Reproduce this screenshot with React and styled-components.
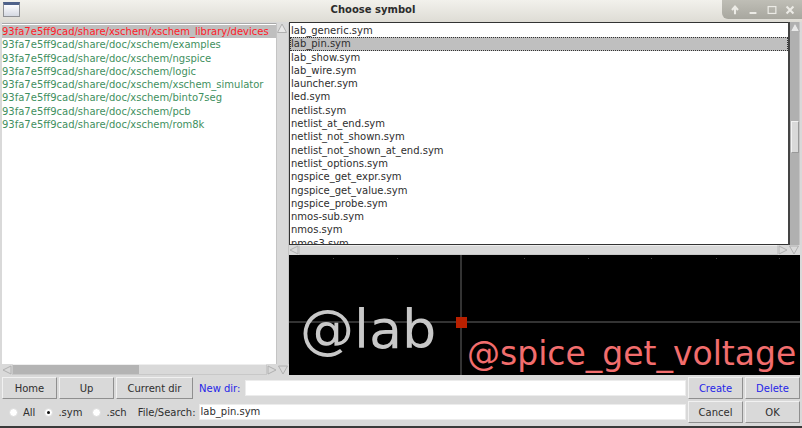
import React from 'react'
import styled, { createGlobalStyle } from 'styled-components'

const GlobalStyle = createGlobalStyle`
  html, body { margin: 0; padding: 0; background: #dcdad5; }
  * { box-sizing: border-box; }
`

const dirs = [
  '93fa7e5ff9cad/share/xschem/xschem_library/devices',
  '93fa7e5ff9cad/share/doc/xschem/examples',
  '93fa7e5ff9cad/share/doc/xschem/ngspice',
  '93fa7e5ff9cad/share/doc/xschem/logic',
  '93fa7e5ff9cad/share/doc/xschem/xschem_simulator',
  '93fa7e5ff9cad/share/doc/xschem/binto7seg',
  '93fa7e5ff9cad/share/doc/xschem/pcb',
  '93fa7e5ff9cad/share/doc/xschem/rom8k',
]

const files = [
  'lab_generic.sym', 'lab_pin.sym', 'lab_show.sym', 'lab_wire.sym', 'launcher.sym', 'led.sym',
  'netlist.sym', 'netlist_at_end.sym', 'netlist_not_shown.sym', 'netlist_not_shown_at_end.sym',
  'netlist_options.sym', 'ngspice_get_expr.sym', 'ngspice_get_value.sym', 'ngspice_probe.sym',
  'nmos-sub.sym', 'nmos.sym', 'nmos3.sym',
]

const gridDots = [44, 108, 235, 299, 362, 427, 490]

const Window = styled.div`
  width: 802px;
  height: 428px;
  overflow: hidden;
  display: flex;
  flex-direction: column;
  background: #d9d9d9;
  border-bottom: 2px solid #3a3a3a;
  font-family: "DejaVu Sans", sans-serif;
  font-size: 10px;
  color: #2e2e2e;
`

const TitleBar = styled.div`
  position: relative;
  height: 22px;
  flex: none;
  display: flex;
  align-items: center;
  justify-content: center;
  padding: 0 56px 3px 0;
  background: linear-gradient(#f2f1ec, #dedcd5);
  font-weight: bold;
  color: #2c2c2c;
`

const AppIcon = styled.div`
  position: absolute;
  left: 3px;
  top: 2px;
  width: 17px;
  height: 15px;
  border: 1px solid #8e9094;
  border-top: 3px solid #4f628a;
  background: linear-gradient(#fdfdfe, #d4d8e2);
`

const WindowButtons = styled.div`
  position: absolute;
  right: 0;
  top: 0;
  width: 80px;
  height: 19px;
  display: flex;
  align-items: center;
  justify-content: space-around;
  padding: 0 3px 0 4px;
  background: linear-gradient(#bfbeb6, #a8a79f);
  border-bottom-left-radius: 6px;
`

const Body = styled.div`
  flex: none;
  height: 353px;
  display: flex;
`

const LeftPane = styled.div`
  width: 289px;
  flex: none;
  padding: 1px 0 0 2px;
  display: flex;
  flex-direction: column;
`

const RightPane = styled.div`
  flex: 1;
  min-width: 0;
  padding-right: 2px;
  display: flex;
  flex-direction: column;
`

const ListRow = styled.div`
  flex: 1;
  min-height: 0;
  display: flex;
`

const TopRow = styled(ListRow)`
  flex: none;
  height: 223px;
`

const List = styled.div`
  flex: 1;
  min-width: 0;
  overflow: hidden;
  background: #fff;
  border-top: 1px solid ${p => (p.$framed ? '#333' : '#aaa')};
  border-left: ${p => (p.$framed ? '1px solid #333' : 'none')};
  border-bottom: ${p => (p.$framed ? '1px solid #333' : 'none')};
  padding-top: 1px;
`

const Item = styled.div`
  height: 13.3px;
  line-height: 13.3px;
  padding-left: ${p => (p.$framed ? '1px' : '0')};
  white-space: nowrap;
  color: ${p => p.$color || '#2e2e2e'};
  background: ${p => (p.$active ? '#bfbfbf' : 'transparent')};
  outline: ${p => (p.$focus ? '1px dotted #333' : 'none')};
  outline-offset: -1px;
`

const VTrack = styled.div`
  position: relative;
  width: ${p => (p.$dark ? 12 : 13)}px;
  flex: none;
  background: ${p => (p.$dark ? '#b0b0b0' : '#d9d9d9')};
  border-left: ${p => (p.$dark ? '2px solid #444' : '1px solid #c4c4c4')};
  border-right: 1px solid #c4c4c4;
`

const Thumb = styled.div`
  position: absolute;
  left: 1px;
  right: 0;
  top: ${p => p.$top}px;
  height: ${p => p.$height}px;
  background: #d9d9d9;
  border: 1px solid #f2f2f2;
  border-right-color: #999;
  border-bottom-color: #999;
`

const HBar = styled.div`
  height: ${p => p.$height}px;
  flex: none;
  display: flex;
  align-items: center;
  background: #d9d9d9;
`

const HTrack = styled.div`
  align-self: stretch;
  flex: 1;
  background: ${p => (p.$fill ? 'linear-gradient(90deg, #b4b4b4 0, #b4b4b4 50%, #d9d9d9 50%)' : '#d9d9d9')};
  border: 1px solid #c8c8c8;
  border-top-color: #eee;
`

const Arrow = styled.svg`
  display: block;
  flex: none;
`

const Canvas = styled.svg`
  display: block;
  flex: 1;
  min-height: 0;
  width: 511px;
  background: #000;
`

const Controls = styled.div`
  flex: 1;
  display: flex;
  flex-direction: column;
  gap: 2px;
  padding: 2px 2px 0;
`

const ControlRow = styled.div`
  height: 22px;
  flex: none;
  display: flex;
  align-items: center;
`

const Button = styled.button`
  width: ${p => p.$width}px;
  height: 100%;
  flex: none;
  margin-left: ${p => p.$gap || 2}px;
  padding: 0;
  background: #d9d9d9;
  border: 1px solid;
  border-color: #f1f1f1 #8f8f8f #8f8f8f #f1f1f1;
  font: inherit;
  color: ${p => (p.$blue ? '#2525e8' : '#2e2e2e')};
  &:first-child { margin-left: 0; }
`

const Label = styled.span`
  margin-left: ${p => p.$gap || 0}px;
  white-space: nowrap;
  color: ${p => (p.$blue ? '#2525e8' : '#2e2e2e')};
`

const Entry = styled.div`
  flex: 1;
  min-width: 0;
  height: 16px;
  margin-left: ${p => p.$gap}px;
  padding-left: 1px;
  background: #fff;
  border: 1px solid #ececec;
  line-height: 14px;
  white-space: nowrap;
  color: #2e2e2e;
`

const Radio = styled.span`
  display: inline-flex;
  align-items: center;
  justify-content: center;
  width: 9px;
  height: 9px;
  margin-left: ${p => p.$gap}px;
  margin-right: 5px;
  border-radius: 50%;
  background: #fff;
  border: 1px solid #dcdcdc;
  &::after {
    content: '';
    width: 3px;
    height: 3px;
    border-radius: 50%;
    background: ${p => (p.$on ? '#111' : 'transparent')};
  }
`

const LeftArrow = () => (
  <Arrow width="10" height="10" viewBox="0 0 10 10"><path d="M9 1 L1 5 L9 9 Z" fill="#d9d9d9" stroke="#b0b0b0" /></Arrow>
)
const RightArrow = () => (
  <Arrow width="10" height="10" viewBox="0 0 10 10"><path d="M1 1 L9 5 L1 9 Z" fill="#d9d9d9" stroke="#b0b0b0" /></Arrow>
)
const UpArrow = () => (
  <Arrow width="10" height="10" viewBox="0 0 10 10"><path d="M5 1 L9.5 9.5 L0.5 9.5 Z" fill="#e8e8e8" stroke="#b0b0b0" /></Arrow>
)
const DownArrow = () => (
  <Arrow width="12" height="10" viewBox="0 0 12 10"><path d="M1.5 1 L10.5 1 L6 9 Z" fill="#d9d9d9" stroke="#b0b0b0" /></Arrow>
)

const WinIcon = ({ children }) => (
  <svg width="12" height="12" viewBox="0 0 14 14" fill="none" stroke="#ecebe6" strokeWidth="1.6">{children}</svg>
)

export default function App() {
  return (
    <Window>
      <GlobalStyle />
      <TitleBar>
        <AppIcon />
        Choose symbol
        <WindowButtons>
          <WinIcon><path d="M7 12 V5 M3.5 7 L7 3 L10.5 7" strokeWidth="2.4" /></WinIcon>
          <WinIcon><path d="M3 10.5 H11" strokeWidth="2.4" /></WinIcon>
          <WinIcon><rect x="2.5" y="3" width="9" height="8" strokeWidth="1.4" /></WinIcon>
          <WinIcon><path d="M3 3 L11 11 M11 3 L3 11" strokeWidth="2.4" /></WinIcon>
        </WindowButtons>
      </TitleBar>
      <Body>
        <LeftPane>
          <ListRow>
            <List>
              {dirs.map((d, i) => (
                <Item key={d} $active={i === 0} $color={i === 0 ? '#ff1a28' : '#3f9060'}>{d}</Item>
              ))}
            </List>
            <VTrack><UpArrow /></VTrack>
          </ListRow>
          <HBar $height={11}>
            <LeftArrow />
            <HTrack $fill />
            <RightArrow />
            <DownArrow />
          </HBar>
        </LeftPane>
        <RightPane>
          <TopRow>
            <List $framed>
              {files.map((f, i) => (
                <Item key={f} $framed $active={i === 1} $focus={i === 1}>{f}</Item>
              ))}
            </List>
            <VTrack $dark>
              <UpArrow />
              <Thumb $top={99} $height={32} />
            </VTrack>
          </TopRow>
          <HBar $height={10}>
            <LeftArrow />
            <HTrack />
            <RightArrow />
            <DownArrow />
          </HBar>
          <Canvas viewBox="0 0 511 120">
            {gridDots.map(x => (
              <rect key={x} x={x} y="3" width="1" height="1" fill="#444" />
            ))}
            <path d="M172 0 V120 M0 67 H511" stroke="#444" strokeWidth="1.5" />
            <rect x="167" y="62" width="11" height="11" fill="#b82000" />
            <text x="11" y="93" fontFamily="'DejaVu Sans', sans-serif" fontSize="54" fill="#c8c8c8">@lab</text>
            <text x="178" y="110" fontFamily="'DejaVu Sans', sans-serif" fontSize="33" fill="#f26d6d">@spice_get_voltage</text>
          </Canvas>
        </RightPane>
      </Body>
      <Controls>
        <ControlRow>
          <Button $width={55}>Home</Button>
          <Button $width={55}>Up</Button>
          <Button $width={77}>Current dir</Button>
          <Label $blue $gap={6}>New dir:</Label>
          <Entry $gap={5} />
          <Button $width={55} $blue>Create</Button>
          <Button $width={55} $blue>Delete</Button>
        </ControlRow>
        <ControlRow>
          <Radio $gap={7} />
          <Label>All</Label>
          <Radio $gap={9} $on />
          <Label>.sym</Label>
          <Radio $gap={10} />
          <Label>.sch</Label>
          <Label $gap={11}>File/Search:</Label>
          <Entry $gap={3}>lab_pin.sym</Entry>
          <Button $width={55}>Cancel</Button>
          <Button $width={55}>OK</Button>
        </ControlRow>
      </Controls>
    </Window>
  )
}
